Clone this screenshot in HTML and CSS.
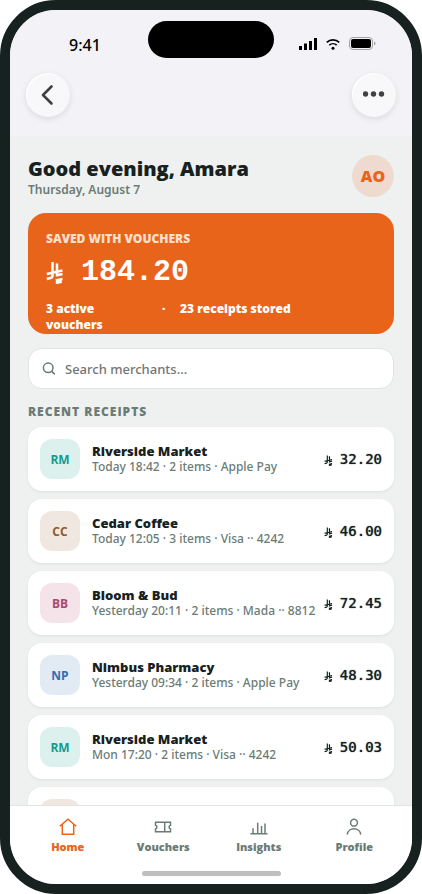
FILE: index.html
```html
<!DOCTYPE html>
<html lang="en">
<head>
<meta charset="utf-8">
<meta name="viewport" content="width=device-width, initial-scale=1">
<title>Receipts</title>
<link rel="stylesheet" href="styles.css">
</head>
<body>
<svg class="defs" aria-hidden="true">
  <symbol id="riyal" viewBox="0 0 18 23">
    <path d="M6.500 1v13.500q0 2-2 2.500L.8 18M11 2.500v13M.8 13l15.700-3.500M11 14.200l5.500-1.200M9.800 19.500l6.700-1.500M9.800 22l6-1.300"/>
  </symbol>
</svg>
<div class="phone">
  <header class="top">
    <div class="status">
      <span class="time">9:41</span>
      <span class="island"></span>
      <span class="signals">
        <svg width="18" height="12" viewBox="0 0 18 12"><path d="M0 8h3v4H0zM5 5.500h3V12H5zM10 3h3v9h-3zM15 0h3v12h-3z"/></svg>
        <svg width="14" height="12" viewBox="0 0 14 12" fill="none" stroke="#000" stroke-width="1.700"><path d="M.8 4.300a9 9 0 0 1 12.400 0M3.300 7.200a5.400 5.400 0 0 1 7.400 0"/><circle cx="7" cy="10.300" r="1.500" fill="#000" stroke="none"/></svg>
        <svg width="27" height="13" viewBox="0 0 27 13"><rect x=".5" y=".5" width="23" height="12" rx="3.500" fill="none" stroke="#a3a2a6"/><rect x="2" y="2" width="20" height="9" rx="2"/><path d="M25 4.500q1.500.5 1.500 2t-1.500 2z" fill="#a3a2a6"/></svg>
      </span>
    </div>
    <nav class="bar" aria-label="Toolbar">
      <button class="round" aria-label="Back"><svg width="22" height="22" viewBox="0 0 22 22" fill="none" stroke="#404040" stroke-width="2.600" stroke-linecap="round" stroke-linejoin="round"><path d="M14.500 2.500 6 11l8.500 8.500"/></svg></button>
      <button class="round" aria-label="More"><svg width="22" height="22" viewBox="0 0 22 22" fill="#404040"><circle cx="2.500" cy="10" r="2.700"/><circle cx="10.500" cy="10" r="2.700"/><circle cx="18.500" cy="10" r="2.700"/></svg></button>
    </nav>
  </header>

  <main class="content">
    <div class="greeting">
      <div>
        <h1>Good evening, Amara</h1>
        <p class="date">Thursday, August 7</p>
      </div>
      <span class="avatar">AO</span>
    </div>

    <section class="hero">
      <p class="hero-label">SAVED WITH VOUCHERS</p>
      <p class="hero-amount"><svg><use href="#riyal"/></svg><span>184.20</span></p>
      <p class="hero-meta"><span>3 active vouchers</span><span>·</span><span>23 receipts stored</span></p>
    </section>

    <label class="search">
      <svg width="14" height="14" viewBox="0 0 14 14" fill="none" stroke="#6b7b76" stroke-width="1.500" stroke-linecap="round"><circle cx="6.200" cy="5.800" r="4.800"/><path d="m10 9.600 2.300 2.300"/></svg>
      <input type="text" placeholder="Search merchants..." aria-label="Search merchants">
    </label>

    <h2>RECENT RECEIPTS</h2>
    <ul class="list">
      <li><span class="tile teal">RM</span><div class="info"><b>Riverside Market</b><small>Today 18:42 · 2 items · Apple Pay</small></div><span class="price"><svg><use href="#riyal"/></svg>32.20</span></li>
      <li><span class="tile brown">CC</span><div class="info"><b>Cedar Coffee</b><small>Today 12:05 · 3 items · Visa ·· 4242</small></div><span class="price"><svg><use href="#riyal"/></svg>46.00</span></li>
      <li><span class="tile pink">BB</span><div class="info"><b>Bloom &amp; Bud</b><small>Yesterday 20:11 · 2 items · Mada ·· 8812</small></div><span class="price"><svg><use href="#riyal"/></svg>72.45</span></li>
      <li><span class="tile blue">NP</span><div class="info"><b>Nimbus Pharmacy</b><small>Yesterday 09:34 · 2 items · Apple Pay</small></div><span class="price"><svg><use href="#riyal"/></svg>48.30</span></li>
      <li><span class="tile teal">RM</span><div class="info"><b>Riverside Market</b><small>Mon 17:20 · 2 items · Visa ·· 4242</small></div><span class="price"><svg><use href="#riyal"/></svg>50.03</span></li>
      <li><span class="tile brown"></span></li>
    </ul>
  </main>

  <footer class="tabs">
    <nav aria-label="Main">
      <a href="#" class="active"><svg viewBox="0 0 20 20"><path d="M1.800 9.300 10 2.300l8.200 7M4.300 7.500V17.300h11.400V7.500"/></svg>Home</a>
      <a href="#"><svg viewBox="0 0 20 20"><path d="M2.500 5.300h15v2.900a1.900 1.900 0 0 0 0 3.700v2.900h-15v-2.900a1.900 1.900 0 0 0 0-3.700zM11.700 5.300v9.500"/></svg>Vouchers</a>
      <a href="#"><svg viewBox="0 0 20 20"><path d="M1.500 16.800h17M4 16.800v-5.600M8.700 16.800V5.800M12.500 16.800V9M16 16.800V6.500"/></svg>Insights</a>
      <a href="#"><svg viewBox="0 0 20 20"><circle cx="10" cy="5.700" r="3.400"/><path d="M3.200 17.500a6.900 6.900 0 0 1 13.600 0"/></svg>Profile</a>
    </nav>
    <div class="home-indicator"></div>
  </footer>
</div>
</body>
</html>
```

FILE: styles.css
```css
* { box-sizing: border-box; margin: 0; padding: 0; }
body { background: #fff; font-family: "Open Sans", "Noto Sans", sans-serif; color: #17211f; }
.defs { position: absolute; width: 0; height: 0; }
.phone {
  height: 100vh;
  display: flex;
  flex-direction: column;
  border: 10px solid #17211f;
  border-radius: 56px;
  overflow: hidden;
  background: #eef1f0;
}
.top { background: #f2f2f7; height: 126px; flex: none; padding: 11px 16px 0; }
.status {
  display: grid;
  grid-template-columns: 1fr 126px 1fr;
  align-items: center;
}
.time { font: 500 16px/22px "Noto Sans", sans-serif; color: #000; padding: 10px 0 0 43px; }
.island { height: 37px; border-radius: 19px; background: #000; }
.signals { display: flex; align-items: center; gap: 9px; padding: 8px 0 0 25px; }
.bar { display: flex; justify-content: space-between; padding-top: 15px; }
.round {
  width: 44px; height: 44px;
  border: 0; border-radius: 50%;
  background: #f8f8fb;
  box-shadow: 0 2px 6px rgba(0, 0, 0, .1), inset 1px 1px 1px #fff;
  display: grid; place-items: center;
}
.content { flex: 1; min-height: 0; overflow: hidden; padding: 19px 18px 0; }
.greeting { display: flex; justify-content: space-between; align-items: center; }
h1 { font-size: 20px; line-height: 28px; font-weight: 800; }
.date { font: 600 12px/14px "Noto Sans", sans-serif; color: #6b7b76; }
.avatar {
  width: 42px; height: 42px; border-radius: 50%;
  display: grid; place-items: center;
  background: #eedace; color: #e8641b;
  font-size: 16px; font-weight: 800;
}
.hero {
  margin-top: 16px;
  padding: 18px 18px 0;
  height: 121px;
  overflow: hidden;
  border-radius: 18px;
  background: #e8641b;
  color: #fff;
}
.hero-label { font-size: 12px; line-height: 16px; font-weight: 800; color: #ffe0cf; }
.hero-amount {
  display: flex; align-items: center; gap: 17px;
  margin-top: 5px;
  font: 700 30px/40px "Liberation Mono", monospace;
}
.hero-amount svg { width: 18px; height: 23px; fill: none; stroke: #fff; stroke-width: 2.5; }
.hero-meta {
  display: grid; grid-template-columns: 104px 6px 1fr; column-gap: 12px;
  margin-top: 9px;
  font-size: 12px; line-height: 16px; font-weight: 800;
}
.hero-meta span:first-child { padding-right: 40px; }
.search {
  display: flex; align-items: center; gap: 9px;
  height: 41px; margin-top: 14px; padding: 0 13px;
  border: 1px solid #e0e5e3; border-radius: 14px;
  background: #fff;
}
.search input { flex: 1; min-width: 0; border: 0; outline: 0; background: none; font: 500 13px/18px "Noto Sans", sans-serif; }
.search input::placeholder { color: #757575; }
h2 { margin: 15px 0 7px; font-size: 12px; line-height: 16px; font-weight: 800; letter-spacing: 1px; color: #6b7b76; }
.list { list-style: none; display: grid; grid-template-columns: minmax(0, 1fr); gap: 8px; }
.list li {
  display: flex; align-items: center; gap: 12px;
  height: 64px; padding: 0 12px;
  border-radius: 14px; background: #fff;
  box-shadow: 0 1px 3px rgba(23, 33, 31, .08);
}
.tile { width: 40px; height: 40px; border-radius: 12px; display: grid; place-items: center; font-size: 12px; font-weight: 700; }
.teal { background: #dcf0ed; color: #129b8c; }
.brown { background: #efe7e0; color: #8f5a2a; }
.pink { background: #f4e4ea; color: #ab4870; }
.blue { background: #e2eaf4; color: #2f6fb5; }
.info { flex: 1; min-width: 0; display: grid; white-space: nowrap; }
.info b { font-size: 13px; line-height: 16px; font-weight: 800; }
.info small { font: 500 12px/16px "Noto Sans", sans-serif; color: #6b7b76; }
.price { display: flex; align-items: center; gap: 7px; font: 400 14px/18px "DejaVu Sans Mono", monospace; text-shadow: 0 0 1px #17211f; }
.price svg { width: 9px; height: 11px; margin-top: 2px; fill: none; stroke: #17211f; stroke-width: 2.5; }
.tabs { flex: none; height: 79px; background: #fff; border-top: 1px solid #e0e5e3; padding: 11px 10px 0; }
.tabs nav { display: grid; grid-template-columns: repeat(4, 1fr); }
.tabs a { display: grid; justify-items: center; gap: 2px; font-size: 11px; line-height: 16px; font-weight: 800; color: #6b7b76; text-decoration: none; }
.tabs svg { width: 20px; height: 20px; fill: none; stroke: currentColor; stroke-width: 1.5; }
.tabs .active { color: #e8641b; }
.home-indicator { width: 139px; height: 5px; margin: 16px auto 0; border-radius: 3px; background: #bfbfbf; }
```
